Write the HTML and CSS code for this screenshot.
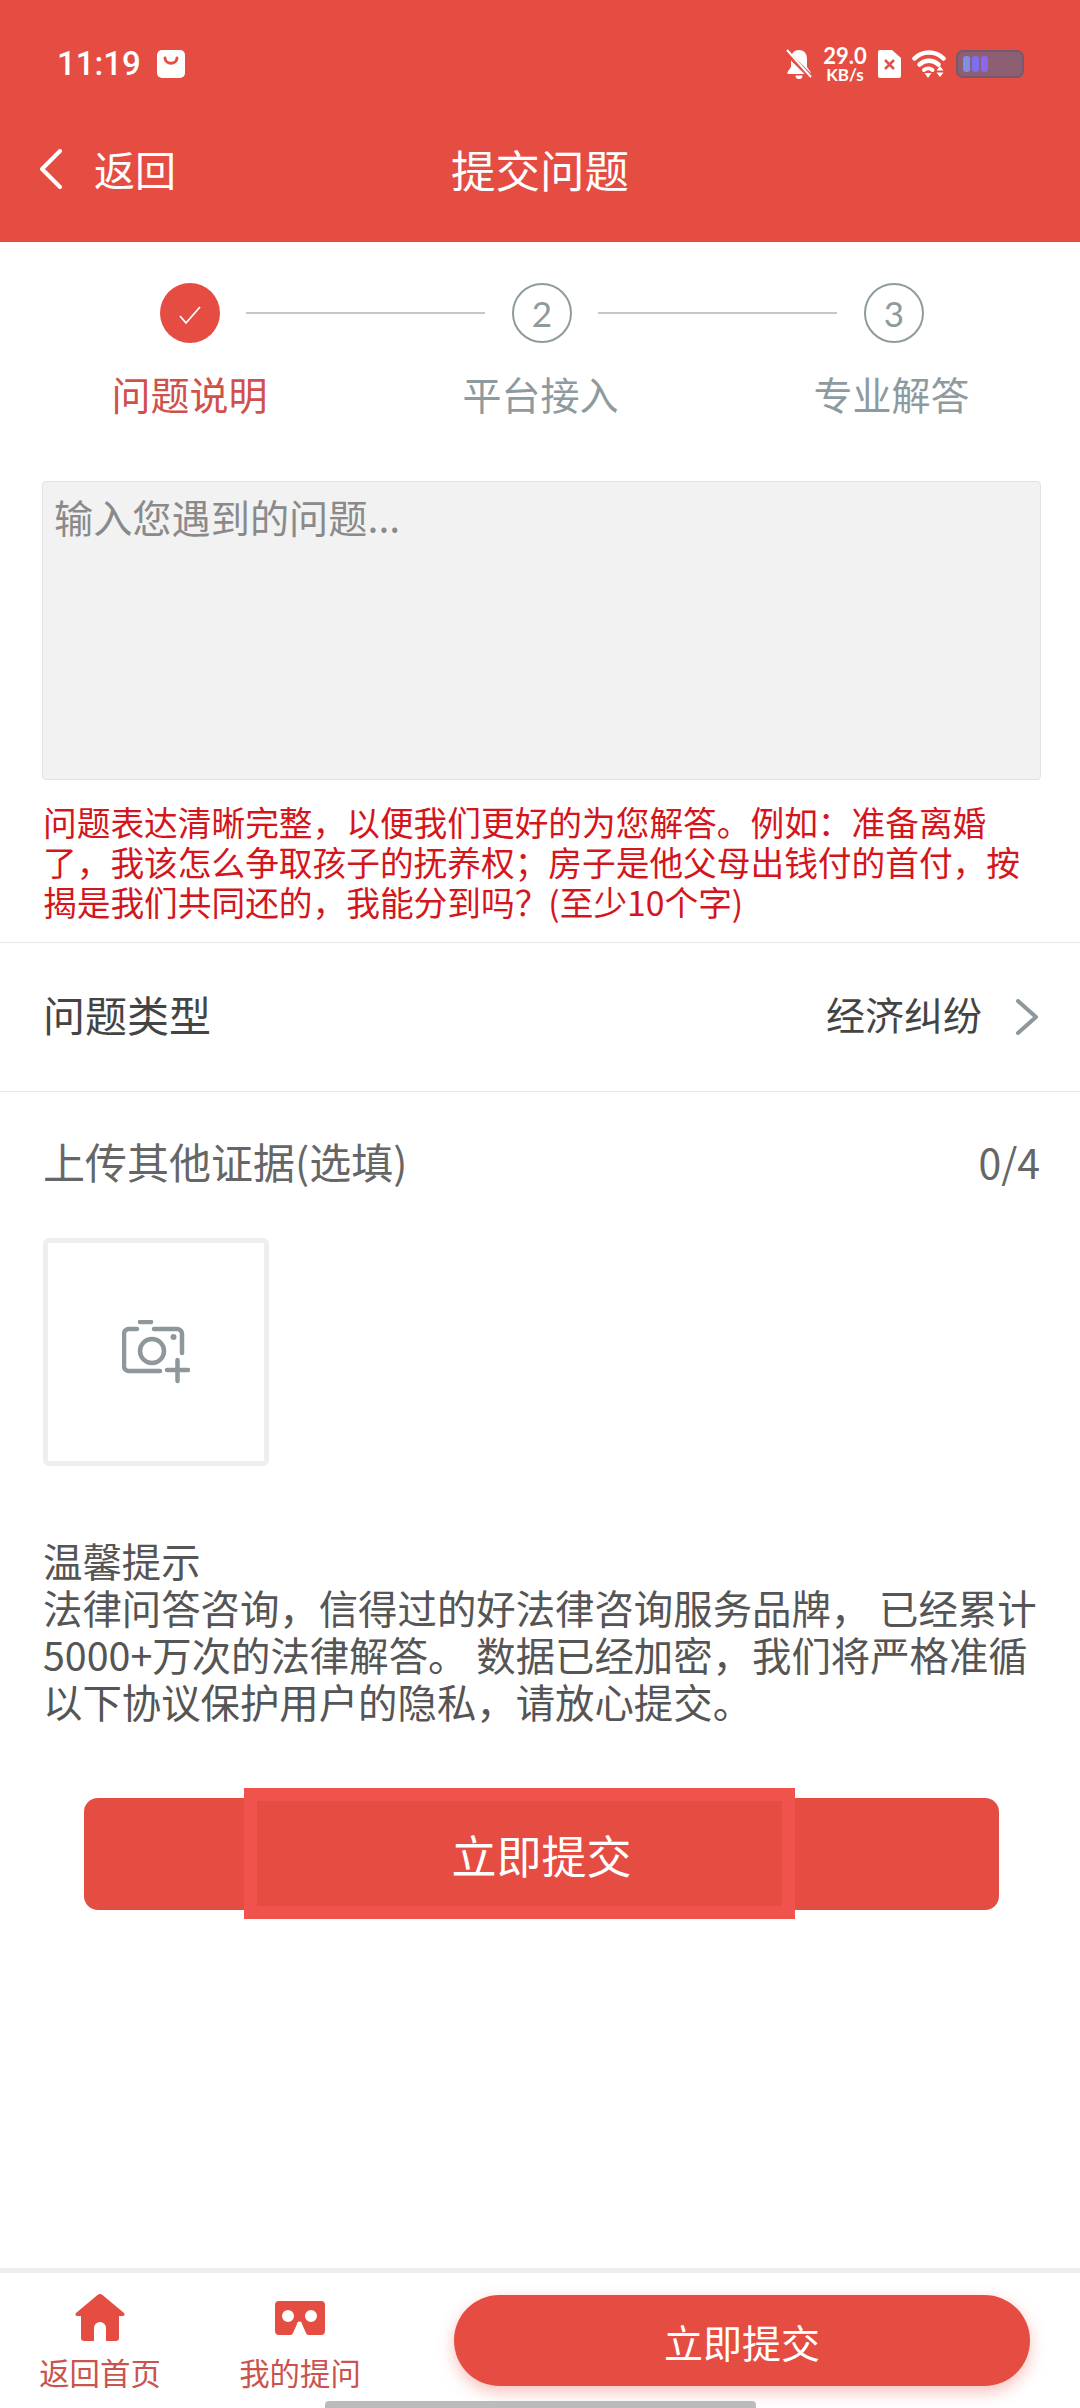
FILE: index.html
```html
<!DOCTYPE html>
<html lang="zh-CN">
<head>
    <meta charset="UTF-8">
    <meta name="viewport" content="width=device-width, initial-scale=1.0">
    <title>提交问题</title>
    <link rel="stylesheet" href="styles.css">
</head>
<body>

<div class="page">
    <header class="header">
        <!-- barra di stato -->
        <div class="status">
            <div class="status-left">
                <span class="time">11:19</span>
                <svg class="icon-msg" viewBox="0 0 28 28">
                    <rect width="28" height="28" rx="5" fill="#fff"/>
                    <path d="M8 8c.5 7 11.500 7 12 0" fill="none" stroke="#e54d42" stroke-width="3" stroke-linecap="round"/>
                </svg>
            </div>
            <div class="status-right">
                <svg class="icon-bell" viewBox="0 0 26 30">
                    <path d="M13 1c5.500 0 8 4 8 9v8l3.500 5c.500 1 0 2-1 2H2.500c-1 0-1.500-1-1-2L5 18v-8c0-5 2.500-9 8-9Z" fill="#fff"/>
                    <path d="M9.500 26.500h7a3.500 3.500 0 0 1-7 0Z" fill="#fff"/>
                    <path d="M0 3l25 25" stroke="#e54d42" stroke-width="5"/>
                    <path d="M1 1l24 27" stroke="#fff" stroke-width="2"/>
                </svg>
                <div class="speed">
                    <span class="speed-num">29.0</span>
                    <span class="speed-unit">KB/s</span>
                </div>
                <svg class="icon-sim" viewBox="0 0 23 28">
                    <path d="M2 0h12l9 8v18a2 2 0 0 1-2 2H2a2 2 0 0 1-2-2V2a2 2 0 0 1 2-2Z" fill="#fff"/>
                    <path d="M7 10l9 9M16 10l-9 9" stroke="#d9534f" stroke-width="2.500"/>
                </svg>
                <svg class="icon-wifi" viewBox="0 0 34 28">
                    <path d="M2.500 8.500c8-8 21-8 29 0" fill="none" stroke="#fff" stroke-width="4.500" stroke-linecap="round"/>
                    <path d="M7.500 14.500c5.500-5 13.500-5 19 0" fill="none" stroke="#fff" stroke-width="4.500" stroke-linecap="round"/>
                    <path d="M12 20c2.500-2 6-2 8.500 0" fill="none" stroke="#fff" stroke-width="4" stroke-linecap="round"/>
                    <path d="M12.500 23h7l-3.500 5Z" fill="#fff"/>
                    <path d="M28 16l3.500 4.500h-7ZM24.500 22.500h7L28 27Z" fill="#fff"/>
                </svg>
                <div class="battery">
                    <span class="cell cell-1"></span>
                    <span class="cell cell-2"></span>
                    <span class="cell cell-3"></span>
                </div>
            </div>
        </div>
        <!-- barra titolo -->
        <div class="nav">
            <div class="nav-back">
                <svg class="icon-back" viewBox="0 0 25 40">
                    <path d="M22 2L4 20l18 18" fill="none" stroke="#fff" stroke-width="4" stroke-linecap="round" stroke-linejoin="round"/>
                </svg>
                <span class="back-text">返回</span>
            </div>
            <h1 class="nav-title">提交问题</h1>
        </div>
    </header>

    <div class="steps">
        <div class="step-circles">
            <span class="circle circle-done">
                <svg class="icon-check" viewBox="0 0 24 20">
                    <path d="M2 11l6 7L22 2" fill="none" stroke="#fff" stroke-width="1.800"/>
                </svg>
            </span>
            <span class="step-line"></span>
            <span class="circle">2</span>
            <span class="step-line"></span>
            <span class="circle">3</span>
        </div>
        <div class="step-labels">
            <span class="step-label step-label-on">问题说明</span>
            <span class="step-label">平台接入</span>
            <span class="step-label">专业解答</span>
        </div>
    </div>

    <textarea class="question" placeholder="输入您遇到的问题..."></textarea>
    <p class="hint">问题表达清晰完整，以便我们更好的为您解答。例如：准备离婚了，我该怎么争取孩子的抚养权；房子是他父母出钱付的首付，按揭是我们共同还的，我能分到吗？(至少10个字)</p>

    <div class="type-row">
        <span class="type-label">问题类型</span>
        <span class="type-value">经济纠纷</span>
        <svg class="icon-more" viewBox="0 0 25 36">
            <path d="M3 2l18 16L3 34" fill="none" stroke="#8d979c" stroke-width="4" stroke-linecap="round" stroke-linejoin="round"/>
        </svg>
    </div>

    <div class="upload">
        <div class="upload-head">
            <span>上传其他证据(选填)</span>
            <span class="upload-count">0/4</span>
        </div>
        <div class="upload-box">
            <svg class="icon-camera" viewBox="0 0 68 64">
                <g fill="none" stroke="#8d979c" stroke-width="4.500" stroke-linecap="round">
                    <path d="M18 2h11"/>
                    <path d="M15 9H7a5 5 0 0 0-5 5v32a5 5 0 0 0 5 5h31"/>
                    <path d="M32 9h23a5 5 0 0 1 5 5v19"/>
                    <circle cx="30" cy="31" r="12"/>
                    <path d="M45 50h21M55.500 40v21"/>
                </g>
                <circle cx="51.500" cy="17" r="3" fill="#8d979c"/>
            </svg>
        </div>
    </div>

    <p class="notice">温馨提示
法律问答咨询，信得过的好法律咨询服务品牌， 已经累计5000+万次的法律解答。 数据已经加密，我们将严格准循以下协议保护用户的隐私，请放心提交。</p>

    <div class="submit-wrap">
        <button class="submit">立即提交</button>
        <span class="submit-glow"></span>
    </div>

    <footer class="footer">
        <div class="tab">
            <svg class="icon-home" viewBox="0 0 50 48">
                <path d="M22.500 1a4 4 0 0 1 5 0L49 19c1 1 .5 3-1 3h-4v22a3 3 0 0 1-3 3H31V34a6 6 0 0 0-12 0v13H9a3 3 0 0 1-3-3V22H2c-1.500 0-2-2-1-3Z" fill="#e54d42"/>
            </svg>
            <span>返回首页</span>
        </div>
        <div class="tab">
            <svg class="icon-vr" viewBox="0 0 50 34">
                <path fill-rule="evenodd" d="M4 0h42a4 4 0 0 1 4 4v26a4 4 0 0 1-4 4H34a3 3 0 0 1-3-2l-4-9a2.500 2.500 0 0 0-5 0l-4 9a3 3 0 0 1-3 2H4a4 4 0 0 1-4-4V4a4 4 0 0 1 4-4ZM13 9a6 6 0 1 0 0 12 6 6 0 0 0 0-12ZM36 9a6 6 0 1 0 0 12 6 6 0 0 0 0-12Z" fill="#e54d42"/>
            </svg>
            <span>我的提问</span>
        </div>
        <button class="pill">立即提交</button>
        <span class="home-bar"></span>
    </footer>
</div>

</body>
</html>
```

FILE: styles.css
```css
body {
    margin: 0;
    background-color: #fff;
    font-family: "Noto Sans CJK SC", "Noto Sans", sans-serif;
}

.page {
    position: relative;
    width: 1080px;
    height: 2408px;
    display: flex;
    flex-direction: column;
    overflow: hidden;
}

/* header */
.header {
    height: 242px;
    background-color: #e54d42;
    color: #fff;
}

.status {
    height: 100px;
    padding: 46px 56px 0 57px;
    box-sizing: border-box;
    display: flex;
    justify-content: space-between;
    align-items: flex-start;
}

.status-left {
    display: flex;
    align-items: center;
    height: 36px;
    gap: 16px;
}

.time {
    font-family: Roboto, sans-serif;
    font-size: 33px;
    font-weight: 500;
    line-height: 36px;
}

.icon-msg {
    width: 28px;
    height: 28px;
}

.status-right {
    display: flex;
    align-items: center;
    height: 36px;
}

.icon-bell {
    width: 26px;
    height: 30px;
    margin-right: 11px;
}

.speed {
    display: flex;
    flex-direction: column;
    align-items: center;
    width: 44px;
    margin-right: 11px;
    font-family: Lato, sans-serif;
    font-weight: 700;
}

.speed-num {
    font-size: 22px;
    line-height: 21px;
}

.speed-unit {
    font-size: 17px;
    line-height: 17px;
}

.icon-sim {
    width: 23px;
    height: 28px;
    margin-right: 11px;
}

.icon-wifi {
    width: 34px;
    height: 28px;
    margin-right: 10px;
}

.battery {
    width: 68px;
    height: 28px;
    padding: 4px 5px;
    box-sizing: border-box;
    display: flex;
    gap: 2px;
    background-color: #8d5f72;
    border: 2px solid #75596f;
    border-radius: 7px;
}

.cell {
    width: 7px;
    border-radius: 3px;
}

.cell-1 {
    background-color: #7f8ee8;
}

.cell-2 {
    background-color: #7c6ff0;
}

.cell-3 {
    background-color: #8e66ee;
}

.nav {
    position: relative;
    height: 142px;
    display: flex;
    align-items: center;
    justify-content: center;
    padding-bottom: 5px;
    box-sizing: border-box;
}

.nav-back {
    position: absolute;
    left: 38px;
    top: 49px;
    display: flex;
    align-items: center;
    gap: 31px;
    font-size: 41px;
    line-height: 40px;
}

.back-text {
    margin-top: -3px;
}

.icon-back {
    width: 25px;
    height: 40px;
}

.nav-title {
    margin: 0;
    font-size: 44.500px;
    font-weight: 400;
    line-height: 56px;
}

/* steps */
.steps {
    padding-top: 41px;
}

.step-circles {
    display: flex;
    align-items: center;
    padding-left: 160px;
}

.circle {
    width: 60px;
    height: 60px;
    box-sizing: border-box;
    display: flex;
    align-items: center;
    justify-content: center;
    border: 2px solid #8f9a9e;
    border-radius: 50%;
    color: #8f9a9e;
    font-family: Lato, sans-serif;
    font-size: 35px;
    flex: none;
}

.circle-done {
    border: none;
    background-color: #e54d42;
}

.icon-check {
    width: 24px;
    height: 20px;
    margin-top: 3px;
}

.step-line {
    width: 239px;
    height: 2px;
    margin: 0 27px 0 26px;
    background-color: #c4c8ca;
}

.step-labels {
    display: flex;
    padding-left: 14px;
    margin-top: 27px;
}

.step-label {
    width: 351px;
    text-align: center;
    font-size: 39px;
    line-height: 46px;
    color: #8d9ba0;
}

.step-label-on {
    color: #d0504a;
}

/* domanda */
.question {
    display: block;
    width: 999px;
    height: 299px;
    margin: 65px 0 0 42px;
    padding: 11px 11px;
    box-sizing: border-box;
    background-color: #f2f2f2;
    border: 1px solid #e2e2e2;
    border-radius: 4px;
    font-family: inherit;
    font-size: 39.200px;
    line-height: 46px;
    resize: none;
    outline: none;
}

.question::placeholder {
    color: #8a8a8a;
    opacity: 1;
}

.hint {
    width: 1000px;
    margin: 22px 0 0 43px;
    color: #d4161c;
    font-size: 33.700px;
    line-height: 40px;
}

/* tipo */
.type-row {
    height: 150px;
    margin-top: 20px;
    padding: 0 40px 0 43px;
    display: flex;
    align-items: center;
    border-top: 1px solid #e6e6e6;
    border-bottom: 1px solid #e6e6e6;
    box-sizing: border-box;
}

.type-label {
    flex: 1;
    margin-top: -8px;
    font-size: 42px;
    color: #444;
}

.type-value {
    margin-top: -8px;
    font-size: 39px;
    color: #444;
}

.icon-more {
    width: 25px;
    height: 36px;
    margin-left: 33px;
}

/* upload */
.upload {
    padding: 0 40px 0 43px;
}

.upload-head {
    display: flex;
    justify-content: space-between;
    height: 146px;
    padding-top: 41px;
    box-sizing: border-box;
    font-size: 42px;
    line-height: 56px;
    color: #666;
}

.upload-count {
    font-size: 41px;
}

.upload-box {
    width: 226px;
    height: 228px;
    box-sizing: border-box;
    display: flex;
    align-items: center;
    justify-content: center;
    border: 5px solid #eeeeee;
    border-radius: 6px;
}

.icon-camera {
    width: 68px;
    height: 64px;
}

.notice {
    width: 1000px;
    margin: 70px 0 0 43px;
    font-size: 39.400px;
    line-height: 47px;
    color: #555;
    white-space: pre-line;
}

/* pulsante */
.submit-wrap {
    position: relative;
    margin: 74px 0 0 84px;
    width: 915px;
    height: 112px;
}

.submit {
    width: 100%;
    height: 100%;
    background-color: #e54d42;
    border: none;
    border-radius: 14px;
    color: #fff;
    font-family: inherit;
    font-size: 45px;
}

.submit-glow {
    position: absolute;
    left: 160px;
    top: -10px;
    width: 551px;
    height: 131px;
    box-sizing: border-box;
    border: 13px solid #f0534c;
    pointer-events: none;
}

/* footer */
.footer {
    position: absolute;
    left: 0;
    right: 0;
    bottom: 0;
    height: 140px;
    display: flex;
    border-top: 5px solid #eeeeee;
    box-sizing: border-box;
}

.tab {
    width: 200px;
    display: flex;
    flex-direction: column;
    align-items: center;
    color: #cb524d;
    font-size: 30.400px;
    line-height: 36px;
}

.icon-home {
    width: 50px;
    height: 48px;
    margin-top: 21px;
    margin-bottom: 12px;
}

.icon-vr {
    width: 50px;
    height: 34px;
    margin-top: 28px;
    margin-bottom: 19px;
}

.pill {
    width: 576px;
    height: 91px;
    margin: 22px 0 0 54px;
    background-color: #e54d42;
    border: none;
    border-radius: 46px;
    box-shadow: 0 6px 16px rgba(229, 77, 66, 0.35);
    color: #fff;
    font-family: inherit;
    font-size: 39px;
}

.home-bar {
    position: absolute;
    left: 325px;
    bottom: 0;
    width: 431px;
    height: 7px;
    border-radius: 4px 4px 0 0;
    background-color: #bbbbbb;
}
```
